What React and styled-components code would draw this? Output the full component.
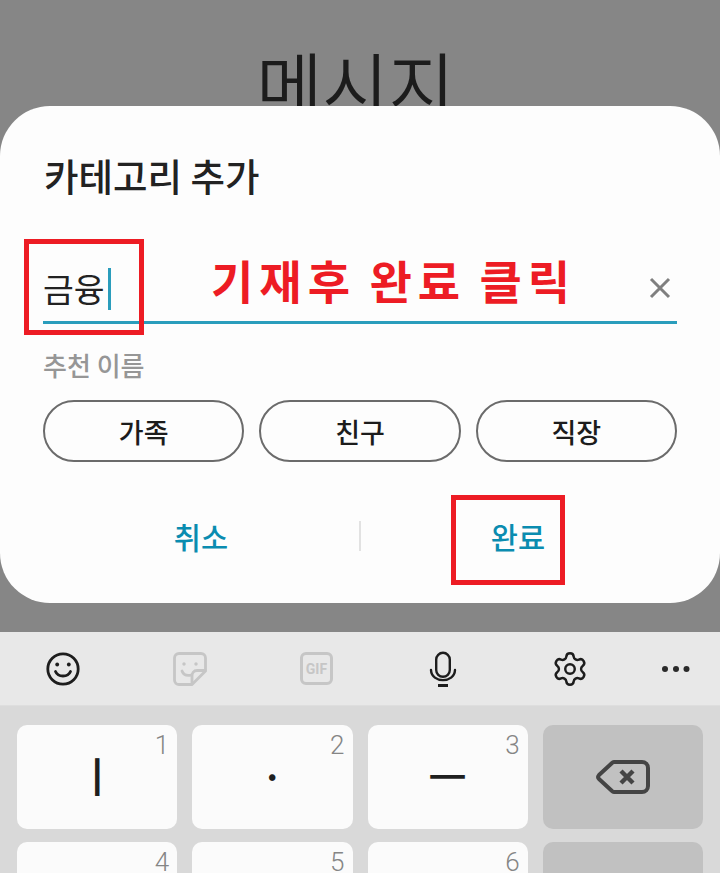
import React from "react";
import styled, { createGlobalStyle } from "styled-components";
import { Settings } from "lucide-react";

const KR = `"Noto Sans CJK KR", "Noto Sans", sans-serif`;

const GlobalStyle = createGlobalStyle`
  html, body {
    margin: 0;
    height: 100%;
    overflow: hidden;
    background: #868686;
    font-family: ${KR};
  }
  * {
    box-sizing: border-box;
  }
`;

function App() {
  return (
    <Screen>
      <GlobalStyle />
      <Backdrop>
        <PageTitle>메시지</PageTitle>
      </Backdrop>
      <Dialog>
        <DialogTitle>카테고리 추가</DialogTitle>
        <Field>
          <FieldValue>금융</FieldValue>
          <Caret />
          <ClearIcon width="24" height="24" viewBox="0 0 24 24">
            <path d="M3 3 L21 21 M21 3 L3 21" />
          </ClearIcon>
          <NameMark />
          <Annotation>기재후 완료 클릭</Annotation>
        </Field>
        <HintLabel>추천 이름</HintLabel>
        <Chips>
          <Chip>가족</Chip>
          <Chip>친구</Chip>
          <Chip>직장</Chip>
        </Chips>
        <Actions>
          <ActionButton>취소</ActionButton>
          <ActionButton $divided>완료</ActionButton>
          <DoneMark />
        </Actions>
      </Dialog>
      <Toolbar>
        <ToolSlot>
          <svg width="36" height="36" viewBox="0 0 36 36" fill="none" stroke="#1d1d1d" strokeWidth="2.8" strokeLinecap="round">
            <circle cx="18" cy="18" r="15.2" />
            <path d="M10.5 20.5 C13 26.5 23 26.5 25.5 20.5" />
            <circle cx="12.2" cy="13.5" r="1.9" fill="#1d1d1d" stroke="none" />
            <circle cx="23.8" cy="13.5" r="1.9" fill="#1d1d1d" stroke="none" />
          </svg>
        </ToolSlot>
        <ToolSlot>
          <svg width="36" height="36" viewBox="0 0 36 36" fill="none" stroke="#c6c6c6" strokeWidth="2.8" strokeLinejoin="round" strokeLinecap="round">
            <path d="M7 2.5 H29 a4.5 4.5 0 0 1 4.5 4.5 V20 L20 33.5 H7 a4.5 4.5 0 0 1 -4.5 -4.5 V7 a4.5 4.5 0 0 1 4.5 -4.5 Z" />
            <path d="M33.2 19.5 H25 C21.5 19.5 20 22.5 20 25 V33" />
            <path d="M10 20 C11.5 24 15.5 25 19.5 24" />
            <circle cx="12" cy="13" r="1.7" fill="#c6c6c6" stroke="none" />
            <circle cx="24" cy="13" r="1.7" fill="#c6c6c6" stroke="none" />
          </svg>
        </ToolSlot>
        <ToolSlot>
          <GifBadge>GIF</GifBadge>
        </ToolSlot>
        <ToolSlot>
          <svg width="30" height="36" viewBox="0 0 30 36" fill="none" stroke="#1d1d1d" strokeWidth="2.4" strokeLinecap="round">
            <rect x="8.2" y="1.8" width="13.6" height="24" rx="6.8" />
            <path d="M3 19 C3.5 32.5 26.5 32.5 27 19" />
            <path d="M10 34.5 H20" strokeWidth="3" strokeLinecap="butt" />
          </svg>
        </ToolSlot>
        <ToolSlot>
          <Settings size={38} color="#1d1d1d" strokeWidth={1.55} />
        </ToolSlot>
        <ToolSlot>
          <svg width="30" height="8" viewBox="0 0 30 8" fill="#2a2a2a">
            <circle cx="4" cy="4" r="3" />
            <circle cx="15" cy="4" r="3" />
            <circle cx="25.5" cy="4" r="3" />
          </svg>
        </ToolSlot>
      </Toolbar>
      <Keyboard>
        <Key>
          <KeyDigit>1</KeyDigit>
          <KeyGlyph>ㅣ</KeyGlyph>
        </Key>
        <Key>
          <KeyDigit>2</KeyDigit>
          <KeyGlyph>·</KeyGlyph>
        </Key>
        <Key>
          <KeyDigit>3</KeyDigit>
          <KeyGlyph>ㅡ</KeyGlyph>
        </Key>
        <Key $action>
          <svg width="54" height="36" viewBox="0 0 54 36" fill="none" stroke="#444" strokeWidth="4" strokeLinejoin="round" strokeLinecap="round">
            <path d="M18 3 H46 a6 6 0 0 1 6 6 V27 a6 6 0 0 1 -6 6 H18 a3 3 0 0 1 -2 -1 L3 20 a3 3 0 0 1 0 -4 L16 4 a3 3 0 0 1 2 -1 Z" />
            <path d="M25 12 L37 24 M37 12 L25 24" strokeWidth="4.4" strokeLinecap="butt" />
          </svg>
        </Key>
        <Key>
          <KeyDigit>4</KeyDigit>
        </Key>
        <Key>
          <KeyDigit>5</KeyDigit>
        </Key>
        <Key>
          <KeyDigit>6</KeyDigit>
        </Key>
        <Key $action />
      </Keyboard>
    </Screen>
  );
}

const Screen = styled.div`
  position: relative;
  width: 720px;
  height: 873px;
  overflow: hidden;
  display: flex;
  flex-direction: column;
`;
const Backdrop = styled.div`
  height: 632px;
  flex: none;
  background: #868686;
  display: flex;
  justify-content: center;
  padding: 42px 9px 0 0;
`;
const PageTitle = styled.h1`
  margin: 0;
  font-size: 72px;
  line-height: 80px;
  font-weight: 350;
  color: #1c1c1c;
`;
const Dialog = styled.div`
  position: absolute;
  top: 106px;
  left: 0;
  width: 720px;
  height: 497px;
  padding: 47px 43px 0;
  background: #fdfdfd;
  border-radius: 50px;
`;
const DialogTitle = styled.h2`
  margin: 0 0 0 1px;
  height: 45px;
  font-size: 37.5px;
  line-height: 44px;
  font-weight: 500;
  color: #222;
  white-space: nowrap;
`;
const Field = styled.div`
  position: relative;
  margin-top: 62px;
  height: 64px;
  display: flex;
  align-items: center;
  padding: 0 0 6px 0;
  border-bottom: 3px solid #2a9dbc;
`;
const FieldValue = styled.span`
  font-size: 33.5px;
  line-height: 44px;
  color: #222;
`;
const Caret = styled.span`
  width: 3px;
  height: 42px;
  margin: 3px 0 0 3px;
  background: #2a9dbc;
`;
const ClearIcon = styled.svg`
  margin-left: auto;
  margin-right: 5px;
  fill: none;
  stroke: #7f7f7f;
  stroke-width: 3;
`;
const NameMark = styled.div`
  position: absolute;
  left: -19px;
  top: -21px;
  width: 120px;
  height: 96px;
  border: 5px solid #ed1c24;
`;
const Annotation = styled.div`
  position: absolute;
  left: 168px;
  top: -9px;
  font-size: 46px;
  line-height: 56px;
  font-weight: 700;
  letter-spacing: 6px;
  word-spacing: -3px;
  color: #ed1c24;
  white-space: nowrap;
`;
const HintLabel = styled.div`
  margin-top: 27px;
  font-size: 26px;
  line-height: 28px;
  font-weight: 500;
  color: #969696;
`;
const Chips = styled.div`
  margin-top: 21px;
  display: grid;
  grid-template-columns: repeat(3, 1fr);
  gap: 15px;
`;
const Chip = styled.div`
  height: 62px;
  display: flex;
  align-items: center;
  justify-content: center;
  border: 2px solid #6b6b6b;
  border-radius: 31px;
  font-size: 27px;
  font-weight: 500;
  color: #1c1c1c;
`;
const Actions = styled.div`
  position: relative;
  margin-top: 44px;
  height: 60px;
  display: grid;
  grid-template-columns: 316px 318px;
  align-items: center;
`;
const ActionButton = styled.div`
  position: relative;
  text-align: center;
  font-size: 29.5px;
  line-height: 40px;
  font-weight: 500;
  color: #0a8cb0;

  ${(p) =>
    p.$divided &&
    `
    &::before {
      content: "";
      position: absolute;
      left: 0;
      top: 5px;
      width: 2px;
      height: 30px;
      background: #e2e2e2;
    }
  `}
`;
const DoneMark = styled.div`
  position: absolute;
  left: 408px;
  top: -11px;
  width: 114px;
  height: 90px;
  border: 5px solid #ed1c24;
`;
const Toolbar = styled.div`
  height: 74px;
  flex: none;
  display: grid;
  grid-template-columns: repeat(5, 126.6px) 87px;
  align-items: center;
  background: #e8e8e8;
  border-bottom: 1px solid #dedede;
`;
const ToolSlot = styled.div`
  display: flex;
  align-items: center;
  justify-content: center;
`;
const GifBadge = styled.div`
  width: 33px;
  height: 33px;
  display: flex;
  align-items: center;
  justify-content: center;
  border: 3px solid #c6c6c6;
  border-radius: 6px;
  font-family: Roboto, "Liberation Sans", sans-serif;
  font-size: 14px;
  font-weight: 700;
  color: #c6c6c6;
`;
const Keyboard = styled.div`
  flex: 1;
  display: grid;
  grid-template-columns: repeat(4, 1fr);
  grid-auto-rows: 104px;
  gap: 13px 15px;
  padding: 19px 17px 0;
  background: #d9d9d9;
`;
const Key = styled.div`
  position: relative;
  display: flex;
  align-items: center;
  justify-content: center;
  border-radius: 10px;
  background: ${(p) => (p.$action ? "#c1c1c1" : "#fbfbfb")};
`;
const KeyDigit = styled.span`
  position: absolute;
  top: 4px;
  right: 8px;
  font-family: Roboto, "Liberation Sans", sans-serif;
  font-size: 26px;
  line-height: 32px;
  font-weight: 300;
  color: #858585;
`;
const KeyGlyph = styled.span`
  font-size: 42px;
  line-height: 48px;
  font-weight: 500;
  padding-bottom: 5px;
  color: #1f1f1f;
`;

export default App;
